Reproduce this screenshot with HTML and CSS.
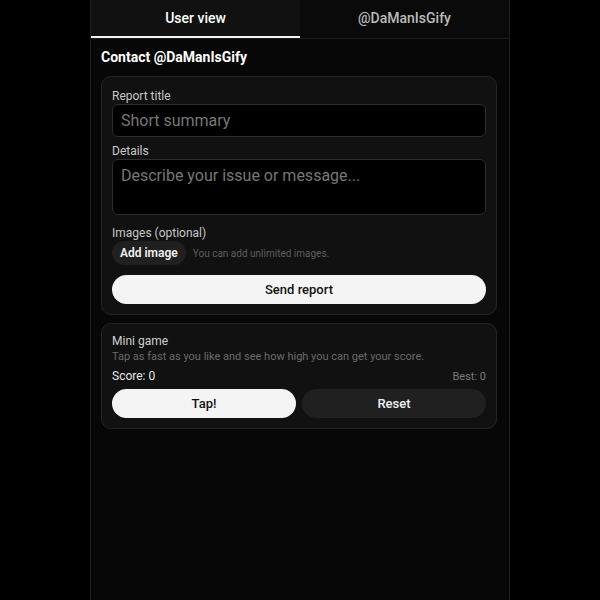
FILE: index.html
```html
<!DOCTYPE html>
<html lang="en">
<head>
<meta charset="utf-8">
<title>Contact @DaManIsGify</title>
<link rel="stylesheet" href="styles.css">
</head>
<body>
<div class="app">
  <nav class="tabs">
    <button class="tab active">User view</button>
    <button class="tab">@DaManIsGify</button>
  </nav>
  <main class="content">
    <h1 class="heading">Contact @DaManIsGify</h1>
    <section class="card form">
      <label class="label">Report title</label>
      <input class="field" type="text" placeholder="Short summary">
      <label class="label">Details</label>
      <textarea class="field area" placeholder="Describe your issue or message..."></textarea>
      <label class="label label-img">Images (optional)</label>
      <div class="img-row">
        <button class="chip">Add image</button>
        <span class="hint">You can add unlimited images.</span>
      </div>
      <button class="btn primary send">Send report</button>
    </section>
    <section class="card game">
      <div class="game-title">Mini game</div>
      <div class="game-sub">Tap as fast as you like and see how high you can get your score.</div>
      <div class="score-row">
        <span class="score">Score: 0</span>
        <span class="best">Best: 0</span>
      </div>
      <div class="game-btns">
        <button class="btn primary">Tap!</button>
        <button class="btn dark">Reset</button>
      </div>
    </section>
  </main>
</div>
</body>
</html>
```
FILE: styles.css
```css
* { box-sizing: border-box; }

html, body {
  margin: 0;
  height: 100%;
  background: #000;
  font-family: Roboto, "Liberation Sans", sans-serif;
  color: #eee;
}

.app {
  width: 420px;
  min-height: 100%;
  margin: 0 auto;
  background: #070707;
  border-left: 1px solid #1e1e1e;
  border-right: 1px solid #1e1e1e;
}

.tabs {
  display: flex;
  border-bottom: 1px solid #1c1c1c;
}

.tab {
  flex: 1;
  height: 38px;
  padding: 0;
  border: 0;
  border-bottom: 2px solid transparent;
  background: #0a0a0a;
  color: #bbb;
  font-family: inherit;
  font-size: 14px;
  font-weight: 500;
}

.tab.active {
  background: #111;
  color: #fff;
  border-bottom-color: #f2f2f2;
}

.content {
  padding: 8px 12px 10px 10px;
}

.heading {
  margin: 1px 0 10px;
  font-size: 14px;
  font-weight: 700;
  color: #fff;
  line-height: 18px;
}

.card {
  background: #111;
  border: 1px solid #252525;
  border-radius: 10px;
  padding: 12px 10px 10px;
  margin-bottom: 8px;
}

.form {
  display: flex;
  flex-direction: column;
}

.label {
  font-size: 12px;
  color: #c8c8c8;
  line-height: 14px;
  margin-bottom: 1px;
}

.field {
  width: 100%;
  height: 33px;
  background: #000;
  border: 1px solid #2e2e2e;
  border-radius: 6px;
  padding: 0 8px;
  font-family: inherit;
  font-size: 16px;
  color: #eee;
  margin-bottom: 7px;
}

.field::placeholder { color: #777; }

.area {
  height: 56px;
  padding: 6px 8px;
  resize: none;
  margin-bottom: 11px;
}

.label-img {
  margin-bottom: 1px;
}

.img-row {
  display: flex;
  align-items: center;
  gap: 7px;
  margin-bottom: 10px;
}

.chip {
  height: 24px;
  padding: 0 8px;
  border: 0;
  border-radius: 12px;
  background: #202020;
  color: #f2f2f2;
  font-family: inherit;
  font-size: 12px;
  font-weight: 600;
}

.hint {
  font-size: 10px;
  color: #5e5e5e;
}

.btn {
  height: 29px;
  border: 0;
  border-radius: 15px;
  font-family: inherit;
  font-size: 13px;
  font-weight: 500;
}

.primary {
  background: #f4f4f4;
  color: #111;
}

.dark {
  background: #202020;
  color: #f0f0f0;
}

.send {
  width: 100%;
}

.game {
  padding: 10px 10px 10px;
}

.game-title {
  font-size: 12px;
  color: #d0d0d0;
  line-height: 15px;
}

.game-sub {
  font-size: 11px;
  color: #6a6a6a;
  line-height: 14px;
  margin-top: 1px;
}

.score-row {
  display: flex;
  justify-content: space-between;
  align-items: baseline;
  margin-top: 5px;
  line-height: 14px;
}

.score {
  font-size: 12px;
  color: #e6e6e6;
}

.best {
  font-size: 11px;
  color: #7a7a7a;
}

.game-btns {
  display: grid;
  grid-template-columns: 1fr 1fr;
  gap: 6px;
  margin-top: 5px;
}
```
